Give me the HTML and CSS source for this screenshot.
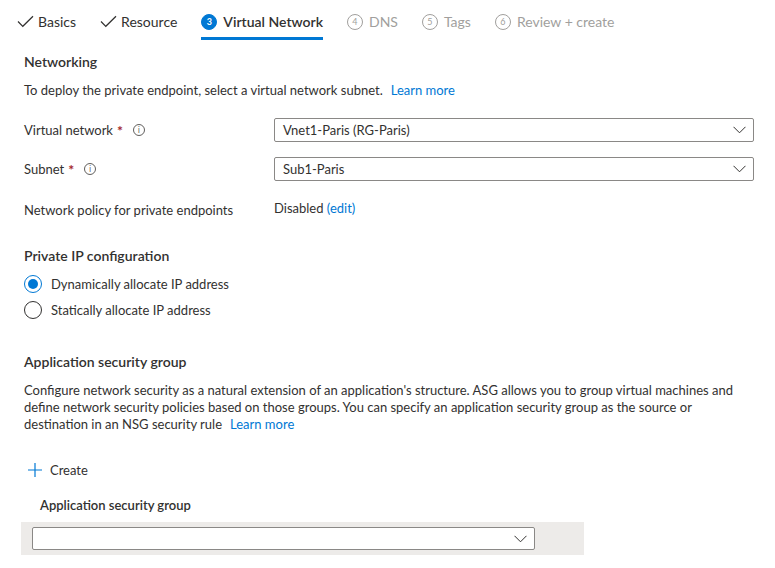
FILE: index.html
```html
<!DOCTYPE html>
<html>
<head>
<meta charset="utf-8">
<link rel="stylesheet" href="styles.css">
</head>
<body>
<nav class="tabs">
  <div class="tab done">
    <svg class="check" width="17" height="13" viewBox="0 0 17 13"><path d="M1 6.5 L5.8 11.3 L16 1.2" fill="none" stroke="#323130" stroke-width="1.2"/></svg>
    <span>Basics</span>
  </div>
  <div class="tab done">
    <svg class="check" width="17" height="13" viewBox="0 0 17 13"><path d="M1 6.5 L5.8 11.3 L16 1.2" fill="none" stroke="#323130" stroke-width="1.2"/></svg>
    <span>Resource</span>
  </div>
  <div class="tab active">
    <span class="num num-active">3</span>
    <span>Virtual Network</span>
  </div>
  <div class="tab off">
    <span class="num">4</span>
    <span>DNS</span>
  </div>
  <div class="tab off">
    <span class="num">5</span>
    <span>Tags</span>
  </div>
  <div class="tab off">
    <span class="num">6</span>
    <span>Review + create</span>
  </div>
</nav>

<main class="content">
  <h2 class="h-networking">Networking</h2>
  <p class="intro"><span>To deploy the private endpoint, select a virtual network subnet.</span><a class="link link-gap">Learn more</a></p>

  <div class="form">
    <div class="label">Virtual network <span class="req">*</span> <span class="info">i</span></div>
    <div class="select"><span>Vnet1-Paris (RG-Paris)</span><svg class="chev" width="13" height="8" viewBox="0 0 13 8"><path d="M0.5 0.8 L6.5 6.8 L12.5 0.8" fill="none" stroke="#323130" stroke-width="1"/></svg></div>

    <div class="label">Subnet <span class="req">*</span> <span class="info">i</span></div>
    <div class="select"><span>Sub1-Paris</span><svg class="chev" width="13" height="8" viewBox="0 0 13 8"><path d="M0.5 0.8 L6.5 6.8 L12.5 0.8" fill="none" stroke="#323130" stroke-width="1"/></svg></div>

    <div class="label label-policy">Network policy for private endpoints</div>
    <div class="value">Disabled <a class="link">(edit)</a></div>
  </div>

  <h2 class="h-ip">Private IP configuration</h2>
  <div class="radios">
    <label class="radio"><span class="dot checked"></span>Dynamically allocate IP address</label>
    <label class="radio"><span class="dot"></span>Statically allocate IP address</label>
  </div>

  <h2 class="h-asg">Application security group</h2>
  <p class="asg-desc"><span>Configure network security as a natural extension of an application's structure. ASG allows you to group virtual machines and define network security policies based on those groups. You can specify an application security group as the source or destination in an NSG security rule</span><a class="link link-gap">Learn more</a></p>

  <div class="create">
    <svg width="14" height="14" viewBox="0 0 14 14"><path d="M7 0 V14 M0 7 H14" stroke="#0078d4" stroke-width="1.2"/></svg>
    <span>Create</span>
  </div>

  <div class="grid-head">Application security group</div>
  <div class="grid-row">
    <div class="select select-asg"><span></span><svg class="chev" width="13" height="8" viewBox="0 0 13 8"><path d="M0.5 0.8 L6.5 6.8 L12.5 0.8" fill="none" stroke="#323130" stroke-width="1"/></svg></div>
  </div>
</main>
</body>
</html>
```

FILE: styles.css
```css
* { box-sizing: border-box; }

body {
  margin: 0;
  background: #ffffff;
  color: #323130;
  font-family: "Lato", "Open Sans", sans-serif;
  font-size: 13px;
}

.tabs {
  display: flex;
  align-items: stretch;
  height: 40px;
  padding-left: 17px;
  gap: 24px;
}

.tab {
  display: flex;
  align-items: center;
  gap: 6px;
  font-size: 14px;
  height: 40px;
  padding-top: 6px;
  color: #323130;
  border-bottom: 3px solid transparent;
}

.tab.done { gap: 4px; }

.tab.active {
  font-weight: 600;
  border-bottom-color: #0078d4;
}

.tab.off { color: #a19f9d; }

.check { display: block; }

.num {
  display: inline-flex;
  align-items: center;
  justify-content: center;
  width: 16px;
  height: 16px;
  border-radius: 50%;
  border: 1px solid #a19f9d;
  font-size: 9px;
  font-weight: 400;
  color: #a19f9d;
}

.num-active {
  background: #0078d4;
  border-color: #0078d4;
  color: #ffffff;
  font-weight: 700;
}

.content {
  padding-left: 24px;
}

h2 {
  margin: 0;
  font-size: 14px;
  font-weight: 600;
  line-height: 20px;
}

.h-networking { margin-top: 12px; }

.intro {
  margin: 9px 0 0;
  line-height: 18px;
}

.link { color: #0078d4; text-decoration: none; }

.link-gap { margin-left: 8px; }

.form {
  display: grid;
  grid-template-columns: 250px 480px;
  grid-auto-rows: 24px;
  row-gap: 15px;
  margin-top: 19px;
  align-items: center;
}

.label {
  display: flex;
  align-items: center;
  gap: 4px;
}

.req {
  color: #a4262c;
  font-size: 14px;
  font-weight: 700;
  margin-right: 6px;
}

.info {
  display: inline-flex;
  align-items: center;
  justify-content: center;
  width: 12px;
  height: 12px;
  border: 1px solid #605e5c;
  border-radius: 50%;
  font-size: 8px;
  color: #605e5c;
  font-family: "DejaVu Sans", sans-serif;
}

.label-policy { padding-top: 3px; }

.select {
  display: flex;
  align-items: center;
  justify-content: space-between;
  height: 24px;
  border: 1px solid #8a8886;
  border-radius: 2px;
  padding: 0 7px 0 8px;
  background: #ffffff;
}

.chev { display: block; }

.h-ip { margin-top: 26px; }

.radios {
  display: flex;
  flex-direction: column;
  gap: 8px;
  margin-top: 9px;
}

.radio {
  display: flex;
  align-items: center;
  gap: 9px;
  height: 18px;
}

.dot {
  width: 18px;
  height: 18px;
  border-radius: 50%;
  border: 1px solid #323130;
  display: flex;
  align-items: center;
  justify-content: center;
}

.dot.checked { border-color: #0078d4; }

.dot.checked::after {
  content: "";
  width: 10px;
  height: 10px;
  border-radius: 50%;
  background: #0078d4;
}

.h-asg { margin-top: 33px; }

.asg-desc {
  margin: 10px 0 0;
  line-height: 17px;
  max-width: 716px;
}

.create {
  display: flex;
  align-items: center;
  gap: 8px;
  margin-top: 27px;
  padding-left: 4px;
  height: 20px;
}

.grid-head {
  margin-top: 15px;
  padding-left: 16px;
  font-weight: 600;
  line-height: 20px;
}

.grid-row {
  margin-top: 7px;
  margin-left: -3px;
  width: 563px;
  background: #edebe9;
  padding: 5px 0 5px 11px;
}

.select-asg { width: 503px; height: 23px; }
```
